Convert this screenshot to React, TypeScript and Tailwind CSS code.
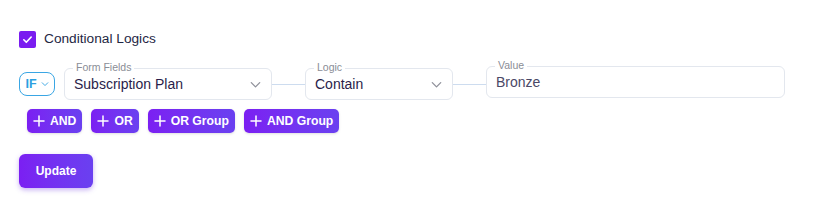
import React from "react";

const ChevronDown = ({ className = "" }: { className?: string }) => (
  <svg viewBox="0 0 16 16" className={className} fill="none" stroke="currentColor" strokeWidth={1.4} strokeLinecap="round" strokeLinejoin="round">
    <path d="M3.5 6l4.5 4.5L12.5 6" />
  </svg>
);

const Plus = () => (
  <svg viewBox="0 0 12 12" className="w-[12px] h-[12px]" fill="none" stroke="currentColor" strokeWidth={1.5} strokeLinecap="round">
    <path d="M6 1v10M1 6h10" />
  </svg>
);

interface FieldProps {
  label: string;
  value: string;
  width: string;
  select?: boolean;
}

const Field: React.FC<FieldProps> = ({ label, value, width, select = true }) => (
  <div className={`relative h-[32px] ${width} border border-[#e3e7ee] rounded-md bg-white flex items-center pl-[9px] pr-[8px]`}>
    <span className="absolute -top-[8px] left-[8px] px-[3px] bg-white text-[10.5px] leading-[12px] text-[#8a8d96]">
      {label}
    </span>
    <span className={`flex-1 text-[14px] ${select ? "text-[#2a1d4a]" : "text-[#4a4866]"}`}>{value}</span>
    {select && <ChevronDown className="w-[15px] h-[15px] text-[#8f919a]" />}
  </div>
);

const Connector = () => <div className="w-[33px] h-px bg-[#cddcef]" />;

const ActionButton = ({ label }: { label: string }) => (
  <button className="h-[24px] px-[6px] rounded-[5px] bg-gradient-to-r from-[#7b1ff2] to-[#6a40f0] text-white text-[12.2px] font-bold flex items-center gap-[5px] shadow-sm">
    <Plus />
    {label}
  </button>
);

export default function App() {
  return (
    <div className="w-[814px] h-[222px] bg-white font-['Liberation_Sans',Arial,sans-serif] pt-[31px] pl-[19px]">
      {/* Checkbox */}
      <label className="flex items-center gap-[8px] h-[17px]">
        <span className="w-[17px] h-[17px] rounded-[2px] bg-[#7a1cf0] flex items-center justify-center">
          <svg viewBox="0 0 12 12" className="w-[11px] h-[11px]" fill="none" stroke="white" strokeWidth={1.8} strokeLinecap="round" strokeLinejoin="round">
            <path d="M2 6.3l2.7 2.7L10 3.3" />
          </svg>
        </span>
        <span className="text-[13.7px] text-[#1f2744]">Conditional Logics</span>
      </label>

      {/* Condition row */}
      <div className="flex items-center mt-[20px]">
        <div className="w-[36px] h-[24px] border-[1.5px] border-[#3aa6e4] rounded-[8px] flex items-center justify-center gap-[3px] text-[#2c9fe0] pl-[1px]">
          <span className="text-[12.5px] font-bold leading-none">IF</span>
          <ChevronDown className="w-[10px] h-[10px]" />
        </div>
        <div className="w-[9px]" />
        <Field label="Form Fields" value="Subscription Plan" width="w-[208px]" />
        <Connector />
        <Field label="Logic" value="Contain" width="w-[148px]" />
        <Connector />
        <div className="-mt-[4px]">
          <Field label="Value" value="Bronze" width="w-[299px]" select={false} />
        </div>
      </div>

      {/* Action buttons */}
      <div className="flex gap-[9px] mt-[9px] ml-[8px]">
        <ActionButton label="AND" />
        <ActionButton label="OR" />
        <ActionButton label="OR Group" />
        <ActionButton label="AND Group" />
      </div>

      <button className="mt-[21px] w-[74px] h-[34px] rounded-[6px] bg-gradient-to-r from-[#7b1ff2] to-[#6a40f0] text-white text-[12px] font-bold shadow-[0_2px_5px_rgba(100,40,220,0.35)]">
        Update
      </button>
    </div>
  );
}
